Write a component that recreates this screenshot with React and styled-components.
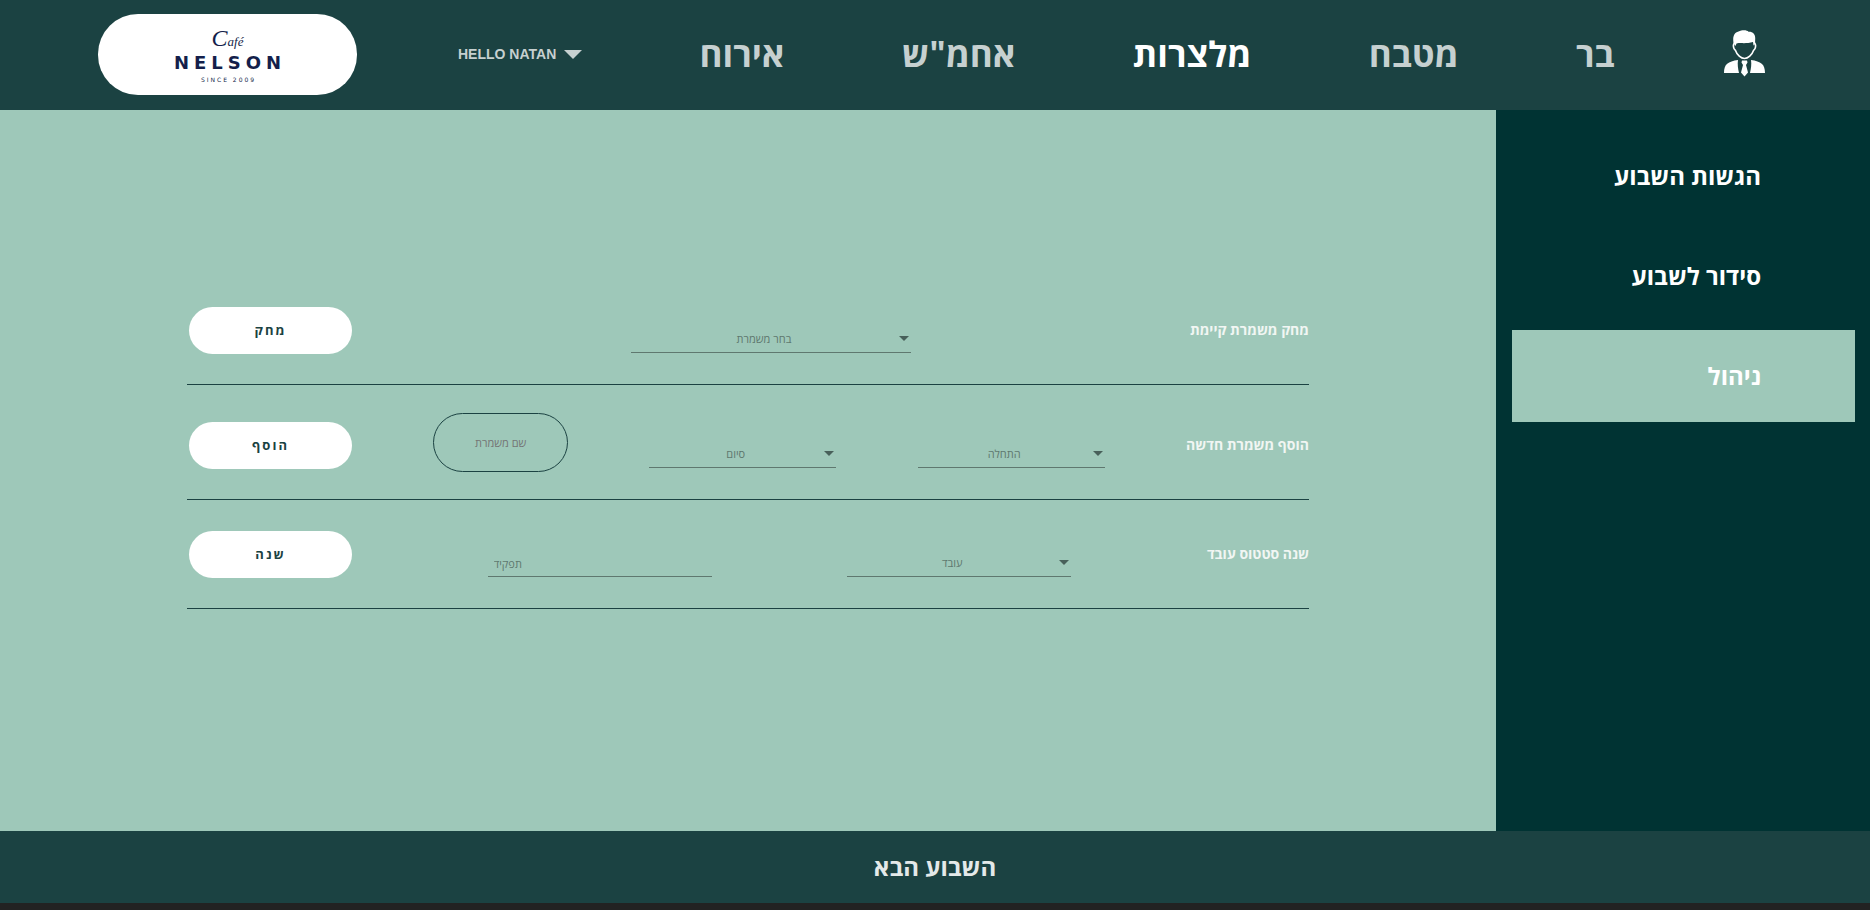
import React from "react";
import styled, { createGlobalStyle } from "styled-components";

const GlobalStyle = createGlobalStyle`
  * { box-sizing: border-box; }
  body {
    margin: 0;
    background: #222222;
    font-family: "Open Sans", "Liberation Sans", sans-serif;
  }
`;

const Page = styled.div`
  display: flex;
  flex-direction: column;
  min-height: calc(100vh - 7px);
  margin-bottom: 7px;
`;

const Header = styled.header`
  display: flex;
  align-items: center;
  gap: 101px;
  height: 110px;
  padding: 0 105px 2px 98px;
  background: #1b4242;
`;

const Nav = styled.nav`
  display: flex;
  flex: 1;
  align-items: center;
  justify-content: space-between;
`;

const Logo = styled.a`
  display: flex;
  flex-direction: column;
  align-items: center;
  width: 259px;
  height: 81px;
  padding-top: 10px;
  border-radius: 40px;
  background: #ffffff;
  color: #141f4b;
  text-decoration: none;
`;

const LogoScript = styled.span`
  display: block;
  height: 29px;
  font: italic 13px/28px "Liberation Serif", serif;
  &::first-letter { font-size: 24px; }
`;

const LogoName = styled.span`
  font: bold 18px/20px "DejaVu Sans", sans-serif;
  letter-spacing: 5px;
  margin-right: -5px;
`;

const LogoYear = styled.span`
  font: 6px/14px "DejaVu Sans", sans-serif;
  letter-spacing: 2px;
  margin-right: -2px;
`;

const UserMenu = styled.button`
  display: flex;
  align-items: center;
  gap: 8px;
  padding: 0;
  border: 0;
  background: none;
  color: #c6d0d0;
  font: bold 14px/20px "Liberation Sans", sans-serif;
`;

const NavLink = styled.a`
  color: ${(p) => (p.$active ? "#ffffff" : "#c6d0d0")};
  font-size: 35px;
  font-weight: 700;
  line-height: 48px;
  text-decoration: none;
`;

const Avatar = styled.svg`
  margin-left: -8px;
`;

const Body = styled.div`
  display: flex;
  flex: 1;
`;

const Main = styled.main`
  display: flex;
  flex: 1;
  align-items: center;
  justify-content: center;
  padding-bottom: 56px;
  background: #9ec8b9;
`;

const Form = styled.div`
  width: 75%;
`;

const Row = styled.form`
  display: flex;
  align-items: center;
  justify-content: space-between;
  min-height: ${(p) => (p.$tall ? "115px" : "109px")};
  padding: ${(p) => (p.$tall ? "6px 0 0 2px" : "0 0 0 2px")};
  border-bottom: 1px solid #1b4242;
`;

const RowTitle = styled.h2`
  margin: 0;
  color: #f1f6f3;
  font-size: 14px;
  font-weight: 700;
  line-height: 20px;
`;

const Action = styled.button`
  width: 163px;
  height: 47px;
  padding: 0;
  border: 0;
  border-radius: 24px;
  background: #ffffff;
  color: #1b4242;
  font: bold 13px/20px "Open Sans", sans-serif;
  letter-spacing: 2px;
`;

const Field = styled.div`
  position: relative;
  width: ${(p) => p.$width};
  margin-top: 16px;
`;

const fieldText = `
  display: block;
  width: 100%;
  height: 29px;
  border: 0;
  border-bottom: 1px solid #5f786f;
  border-radius: 0;
  background: none;
  color: #5f786f;
  font: 11px/20px "Open Sans", sans-serif;
  outline: none;
`;

const Select = styled.select`
  ${fieldText}
  appearance: none;
  padding: 3px 22px 0 8px;
  text-align-last: center;
`;

const LineInput = styled.input`
  ${fieldText}
  padding: 3px 6px 0;
  &::placeholder { color: #5f786f; opacity: 1; }
`;

const Caret = styled.svg`
  position: absolute;
  top: 12px;
  right: 2px;
  pointer-events: none;
`;

const PillInput = styled.input`
  width: 12%;
  height: 59px;
  margin-bottom: 6px;
  padding: 0 8px;
  border: 1px solid #1b4242;
  border-radius: 30px;
  background: none;
  font: 11px/20px "Open Sans", sans-serif;
  text-align: center;
  &::placeholder { color: #757575; opacity: 1; }
`;

const Sidebar = styled.aside`
  display: flex;
  flex-direction: column;
  gap: 8px;
  width: 20%;
  padding: 20px 15px 20px 16px;
  background: #003333;
`;

const SideLink = styled.a`
  display: flex;
  align-items: center;
  height: 92px;
  padding: 0 94px;
  background: ${(p) => (p.$active ? "#9ec8b9" : "transparent")};
  color: #ffffff;
  font-size: 24px;
  font-weight: 700;
  line-height: 32px;
  text-decoration: none;
  white-space: nowrap;
`;

const Footer = styled.footer`
  display: flex;
  align-items: center;
  justify-content: center;
  height: 72px;
  background: #1b4242;
`;

const FooterButton = styled.button`
  padding: 0;
  border: 0;
  background: none;
  color: #e4e9e9;
  font: bold 24px/32px "Open Sans", sans-serif;
`;

function SelectField({ label, width }) {
  return (
    <Field $width={width}>
      <Select aria-label={label} dir="rtl" defaultValue="">
        <option value="">{label}</option>
      </Select>
      <Caret width="10" height="5" viewBox="0 0 10 5" aria-hidden="true">
        <path d="M0 0h10L5 5z" fill="#48605a" />
      </Caret>
    </Field>
  );
}

function UserIcon() {
  return (
    <Avatar width="41" height="49" viewBox="0 0 41 49" role="img" aria-label="משתמש">
      <g fill="#ffffff">
        <path d="M9.500 13C8.500 7 10 2.500 14.500 1.500C18 -.2 23 -.2 24.500 1.800C29 1.500 31.500 4.500 31.200 9L31 14L29.500 15.500L29 12C23 14 16 12.500 12.500 13.500L11.500 16z" />
        <path d="M0 43C0 34 4 31.500 14 30C13.300 34 14 39 15 43z" />
        <path d="M41 43C41 34 37 31.500 27 30C27.700 34 27 39 26 43z" />
        <path d="M18 30.500H23L23.500 32.500L22 35L24 42.500L20.500 46.500L17 42.500L19 35L17.500 32.500z" />
      </g>
      <path
        d="M10.300 13C9 15 9 19 11.500 20.500C13 25 17 28.500 20.500 28.500S28 25 29.500 20.500C32 19 32 15 30.700 13"
        fill="none"
        stroke="#ffffff"
        strokeWidth="1.600"
      />
    </Avatar>
  );
}

const NAV = ["אירוח", 'אחמ"ש', "מלצרות", "מטבח", "בר"];
const SIDE = ["הגשות השבוע", "סידור לשבוע", "ניהול"];

export default function App() {
  return (
    <>
      <GlobalStyle />
      <Page>
        <Header>
          <Logo href="#" aria-label="Café Nelson">
            <LogoScript>Café</LogoScript>
            <LogoName>NELSON</LogoName>
            <LogoYear>SINCE 2009</LogoYear>
          </Logo>
          <Nav>
            <UserMenu type="button">
              HELLO NATAN
              <svg width="18" height="9" viewBox="0 0 18 9" aria-hidden="true">
                <path d="M0 0h18L9 9z" fill="currentColor" />
              </svg>
            </UserMenu>
            {NAV.map((name) => (
              <NavLink key={name} href="#" dir="rtl" $active={name === "מלצרות"}>
                {name}
              </NavLink>
            ))}
            <UserIcon />
          </Nav>
        </Header>
        <Body>
          <Main>
            <Form>
              <Row>
                <Action type="button">מחק</Action>
                <SelectField label="בחר משמרת" width="25%" />
                <RowTitle dir="rtl">מחק משמרת קיימת</RowTitle>
              </Row>
              <Row $tall>
                <Action type="button">הוסף</Action>
                <PillInput aria-label="שם משמרת" placeholder="שם משמרת" />
                <SelectField label="סיום" width="187px" />
                <SelectField label="התחלה" width="187px" />
                <RowTitle dir="rtl">הוסף משמרת חדשה</RowTitle>
              </Row>
              <Row>
                <Action type="button">שנה</Action>
                <Field $width="20%">
                  <LineInput aria-label="תפקיד" placeholder="תפקיד" />
                </Field>
                <SelectField label="עובד" width="20%" />
                <RowTitle dir="rtl">שנה סטטוס עובד</RowTitle>
              </Row>
            </Form>
          </Main>
          <Sidebar>
            {SIDE.map((name) => (
              <SideLink key={name} href="#" dir="rtl" $active={name === "ניהול"}>
                {name}
              </SideLink>
            ))}
          </Sidebar>
        </Body>
        <Footer>
          <FooterButton type="button">השבוע הבא</FooterButton>
        </Footer>
      </Page>
    </>
  );
}
